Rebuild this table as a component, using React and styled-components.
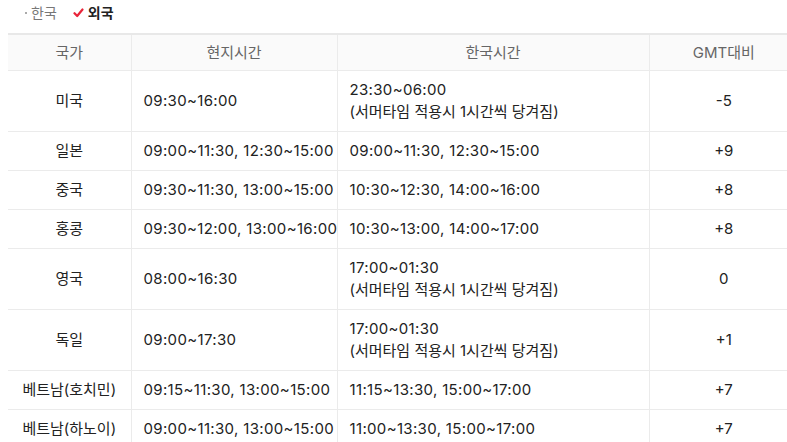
import React from "react";
import styled, { createGlobalStyle } from "styled-components";

const Global = createGlobalStyle`
  html, body { margin: 0; padding: 0; overflow: hidden; background: #fff; }
  body { font-family: Inter, "Noto Sans CJK KR", sans-serif; }
`;

const Page = styled.div`
  padding: 0 0 0 8px;
  width: 800px;
`;

const Tabs = styled.div`
  display: flex;
  align-items: flex-start;
  height: 33px;
  box-sizing: border-box;
  padding: 4px 0 0 17px;
  gap: 16px;
`;

const Tab = styled.span`
  display: inline-flex;
  align-items: center;
  gap: 4px;
  font-size: 14px;
  line-height: 18px;
  color: ${(p) => (p.$active ? "#222" : "#777")};
  font-weight: ${(p) => (p.$active ? 700 : 400)};
`;

const Dot = styled.span`
  width: 2px;
  height: 2px;
  background: #aaa;
  display: inline-block;
`;

const Table = styled.table`
  border-collapse: collapse;
  width: 790px;
  table-layout: fixed;
  border-top: 2px solid #e8e8e8;
  font-size: 15px;
  color: #222;
`;

const Th = styled.th`
  background: #fafafa;
  font-weight: 400;
  color: #666;
  height: 35px;
  padding: 0;
  text-align: center;
  border-bottom: 1px solid #ebebeb;
  border-left: ${(p) => (p.$first ? "none" : "1px solid #ebebeb")};
  line-height: 22px;
`;

const Td = styled.td`
  padding: 8px 12px;
  line-height: 22px;
  text-align: ${(p) => (p.$center ? "center" : "left")};
  border-bottom: 1px solid #ebebeb;
  border-left: ${(p) => (p.$first ? "none" : "1px solid #ebebeb")};
  white-space: nowrap;
  vertical-align: middle;
`;

const Time = styled.span`
  letter-spacing: 0.34px;
`;

const rows = [
  ["미국", "09:30~16:00", ["23:30~06:00", "(서머타임 적용시 1시간씩 당겨짐)"], "-5"],
  ["일본", "09:00~11:30, 12:30~15:00", ["09:00~11:30, 12:30~15:00"], "+9"],
  ["중국", "09:30~11:30, 13:00~15:00", ["10:30~12:30, 14:00~16:00"], "+8"],
  ["홍콩", "09:30~12:00, 13:00~16:00", ["10:30~13:00, 14:00~17:00"], "+8"],
  ["영국", "08:00~16:30", ["17:00~01:30", "(서머타임 적용시 1시간씩 당겨짐)"], "0"],
  ["독일", "09:00~17:30", ["17:00~01:30", "(서머타임 적용시 1시간씩 당겨짐)"], "+1"],
  ["베트남(호치민)", "09:15~11:30, 13:00~15:00", ["11:15~13:30, 15:00~17:00"], "+7"],
  ["베트남(하노이)", "09:00~11:30, 13:00~15:00", ["11:00~13:30, 15:00~17:00"], "+7"],
];

const Check = () => (
  <svg width="11" height="10" viewBox="0 0 11 10">
    <path d="M1.5 5.2 L4.2 8 L9.5 1.5" fill="none" stroke="#e8253a" strokeWidth="2.2" strokeLinecap="round" strokeLinejoin="round" />
  </svg>
);

export default function App() {
  return (
    <>
      <Global />
      <Page>
        <Tabs>
          <Tab><Dot />한국</Tab>
          <Tab $active><Check />외국</Tab>
        </Tabs>
        <Table>
          <colgroup>
            <col style={{ width: 123 }} />
            <col style={{ width: 206 }} />
            <col style={{ width: 312 }} />
            <col style={{ width: 149 }} />
          </colgroup>
          <thead>
            <tr>
              <Th $first>국가</Th>
              <Th>현지시간</Th>
              <Th>한국시간</Th>
              <Th>GMT대비</Th>
            </tr>
          </thead>
          <tbody>
            {rows.map((r) => (
              <tr key={r[0]}>
                <Td $first $center>{r[0]}</Td>
                <Td><Time>{r[1]}</Time></Td>
                <Td>
                  <Time>{r[2][0]}</Time>
                  {r[2][1] && (<><br />{r[2][1]}</>)}
                </Td>
                <Td $center>{r[3]}</Td>
              </tr>
            ))}
          </tbody>
        </Table>
      </Page>
    </>
  );
}
